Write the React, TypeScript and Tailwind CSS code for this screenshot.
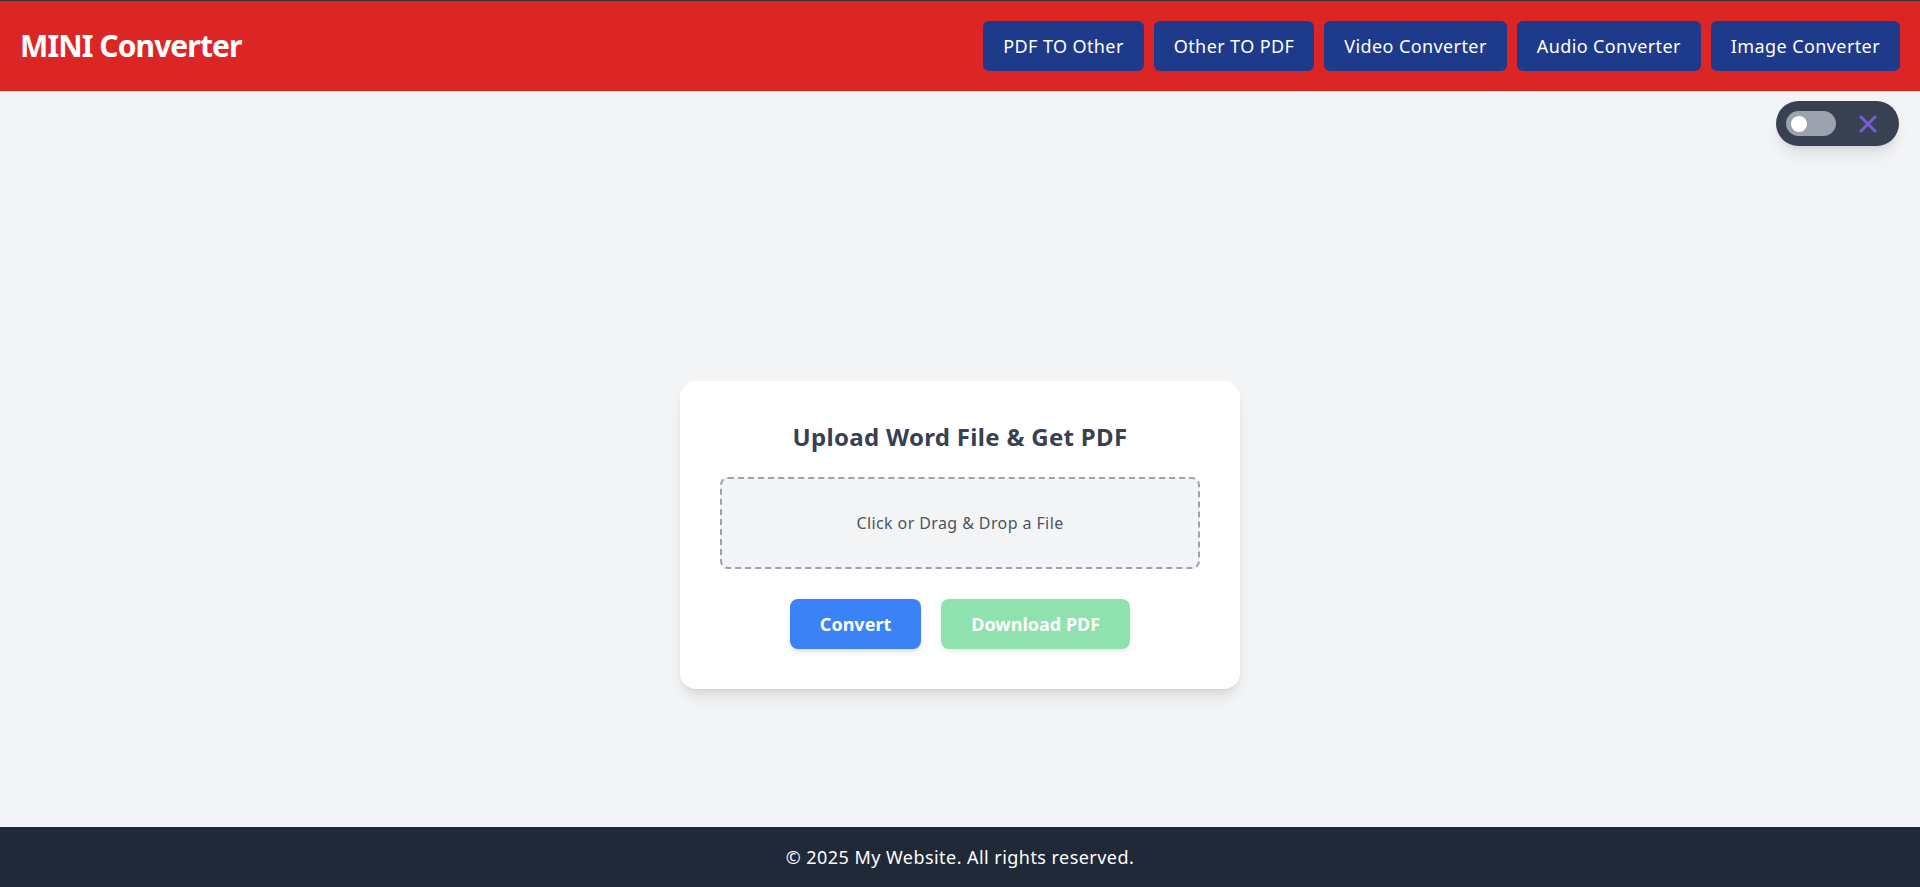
import React from "react";

const font = { fontFamily: '"Segoe UI", "Noto Sans", "Open Sans", sans-serif' };

export default function App() {
  const navs = ["PDF TO Other", "Other TO PDF", "Video Converter", "Audio Converter", "Image Converter"];
  return (
    <div className="relative h-screen overflow-hidden bg-[#f3f4f6]" style={font}>
      <header className="flex items-center justify-between border-t border-[#333] bg-[#dc2626] px-5 py-5">
        <h1 className="text-3xl font-bold tracking-[-0.9px] text-white">MINI Converter</h1>
        <nav className="flex gap-[10px]">
          {navs.map((n) => (
            <button key={n} className="rounded-md bg-[#1e3a8a] px-5 py-[11px] text-lg leading-7 tracking-[0.4px] text-white">
              {n}
            </button>
          ))}
        </nav>
      </header>

      <div className="absolute right-[21px] top-[101px] flex items-center gap-[23px] rounded-full bg-[#374151] py-[10px] pl-[10px] pr-[22px] shadow-lg">
        <div className="flex h-[25px] w-[50px] items-center rounded-full bg-[#9ca3af] px-[5px]">
          <div className="h-4 w-4 rounded-full bg-white" />
        </div>
        <svg width="18" height="18" viewBox="0 0 18 18" fill="none" stroke="#7a5bd8" strokeWidth="3" strokeLinecap="round">
          <line x1="2" y1="2" x2="16" y2="16" />
          <line x1="16" y1="2" x2="2" y2="16" />
        </svg>
      </div>

      <main className="flex h-screen items-center justify-center">
        <div className="w-[560px] rounded-2xl bg-white p-10 shadow-lg">
          <h2 className="mb-6 text-center text-2xl font-bold tracking-[0.3px] text-[#374151]">Upload Word File &amp; Get PDF</h2>
          <div className="rounded-lg border-2 border-dashed border-[#9ca3af] bg-[#f3f4f6] p-8 text-center text-base tracking-[0.4px] text-[#4b5563]">
            Click or Drag &amp; Drop a File
          </div>
          <div className="mt-[30px] flex justify-center gap-5">
            <button className="rounded-lg bg-[#3b82f6] px-[30px] py-[11px] text-lg font-bold leading-7 text-white shadow-md">
              Convert
            </button>
            <button className="rounded-lg bg-[#22c55e] px-[30px] py-[11px] text-lg font-bold leading-7 text-white opacity-50 shadow-md">
              Download PDF
            </button>
          </div>
        </div>
      </main>

      <footer className="absolute bottom-0 left-0 right-0 bg-[#1f2937] py-4 text-center text-lg leading-7 tracking-[0.45px] text-white">
        © 2025 My Website. All rights reserved.
      </footer>
    </div>
  );
}
